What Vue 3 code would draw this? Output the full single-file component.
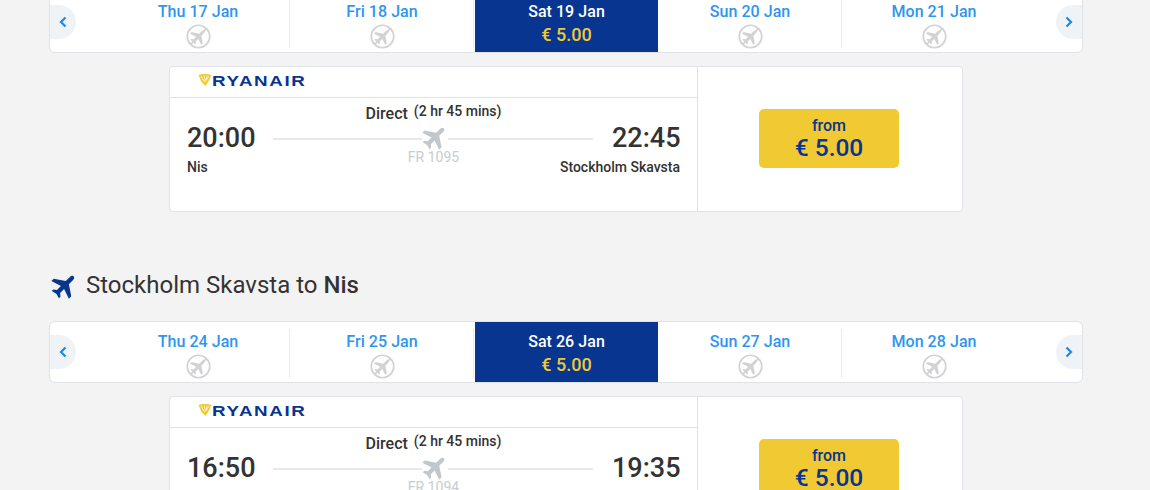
<script setup>
const legs = [
  {
    id: 'out',
    days: ['Thu 17 Jan', 'Fri 18 Jan', 'Sat 19 Jan', 'Sun 20 Jan', 'Mon 21 Jan'],
    depart: '20:00',
    arrive: '22:45',
    from: 'Nis',
    to: 'Stockholm Skavsta',
    flight: 'FR 1095'
  },
  {
    id: 'back',
    title: 'Stockholm Skavsta to ',
    titleBold: 'Nis',
    days: ['Thu 24 Jan', 'Fri 25 Jan', 'Sat 26 Jan', 'Sun 27 Jan', 'Mon 28 Jan'],
    depart: '16:50',
    arrive: '19:35',
    from: 'Stockholm Skavsta',
    to: 'Nis',
    flight: 'FR 1094'
  }
];

// plane pointing up, rotated 45deg where it is used
const planePath = 'M12 .5c1.300 0 2 1.400 2 3v5l9 6v3l-9-3v5l2.500 2v2L12 22.300 7.500 23.500v-2l2.500-2v-5l-9 3v-3l9-6v-5c0-1.600.7-3 2-3z';
</script>

<template>
  <div class="page">
    <section v-for="leg in legs" :key="leg.id" class="leg">
      <h2 v-if="leg.title" class="leg-title">
        <svg class="title-icon" viewBox="0 0 24 24">
          <path :d="planePath" transform="rotate(45 12 12)" />
        </svg>
        <span>{{ leg.title }}<b>{{ leg.titleBold }}</b></span>
      </h2>

      <div class="strip">
        <button class="nav nav-left">
          <svg viewBox="0 0 10 14"><path d="M7.500 2.500 3 7l4.500 4.500" /></svg>
        </button>
        <div class="days">
          <div
            v-for="(day, i) in leg.days"
            :key="day"
            class="day"
            :class="{ active: i === 2, ruled: i === 0 || i === 1 || i === 3 }"
          >
            <span class="day-name">{{ day }}</span>
            <span v-if="i === 2" class="day-price">€ 5.00</span>
            <svg v-else class="no-flight" viewBox="0 0 24 24">
              <circle cx="12" cy="12" r="10.800" />
              <path class="no-plane" :d="planePath" transform="rotate(45 12 12) translate(3.600 3.600) scale(0.7)" />
              <path d="M4.500 19.500 19.500 4.500" />
            </svg>
          </div>
        </div>
        <button class="nav nav-right">
          <svg viewBox="0 0 10 14"><path d="M2.500 2.500 7 7l-4.500 4.500" /></svg>
        </button>
      </div>

      <div class="flight-card">
        <div class="flight-info">
          <div class="carrier">
            <svg class="harp" viewBox="0 0 14 14">
              <path d="M0.500 2C4 .5 10 .5 13.500 2L11 7.500 7.500 13 3.500 9z" />
              <path class="harp-lines" d="M3 3l3.500 6M6 2.500l1.500 6M9 2.500 8 8M11 3 8.500 7" />
            </svg>
            <span class="carrier-name">RYANAIR</span>
          </div>
          <div class="route">
            <div class="duration"><span class="direct">Direct</span><span class="time-span">(2 hr 45 mins)</span></div>
            <div class="times">
              <span class="time">{{ leg.depart }}</span>
              <div class="line">
                <svg class="line-plane" viewBox="0 0 24 24">
                  <path :d="planePath" transform="rotate(45 12 12)" />
                </svg>
              </div>
              <span class="time time-end">{{ leg.arrive }}</span>
            </div>
            <div class="flight-no">{{ leg.flight }}</div>
            <div class="places">
              <span>{{ leg.from }}</span>
              <span>{{ leg.to }}</span>
            </div>
          </div>
        </div>
        <div class="flight-price">
          <button class="price-btn">
            <span class="from">from</span>
            <span class="amount">€ 5.00</span>
          </button>
        </div>
      </div>
    </section>
  </div>
</template>

<style>
html,
body {
  background: #f3f3f3;
  overflow: hidden;
}
</style>

<style scoped>
.page {
  height: 490px;
  overflow: hidden;
  padding: 0 67px 0 49px;
  font-family: Roboto, "Liberation Sans", sans-serif;
  color: #333;
}

.leg {
  margin-top: -9px;
}

.leg + .leg {
  margin-top: 57px;
}

.leg-title {
  display: flex;
  align-items: center;
  gap: 8px;
  height: 32px;
  margin: 0 0 20px 2px;
  font-size: 24px;
  font-weight: 400;
  color: #333;
}

.leg-title b {
  font-weight: 500;
}

.title-icon {
  width: 27px;
  height: 27px;
  fill: #073590;
}

.strip {
  display: flex;
  align-items: center;
  height: 62px;
  box-sizing: border-box;
  background: #fff;
  border: 1px solid #dfe3e8;
  border-radius: 6px;
}

.nav {
  flex: none;
  width: 26px;
  height: 34px;
  padding: 0;
  border: 0;
  background: #f0f3f6;
  display: flex;
  align-items: center;
  justify-content: center;
}

.nav svg {
  width: 10px;
  height: 14px;
  fill: none;
  stroke: #1e88e5;
  stroke-width: 2.200;
}

.nav-left {
  border-radius: 0 17px 17px 0;
}

.nav-right {
  border-radius: 17px 0 0 17px;
}

.days {
  flex: 1;
  display: grid;
  grid-template-columns: repeat(5, 184px);
  justify-content: center;
  align-self: stretch;
  align-items: center;
}

.day {
  height: 60px;
  box-sizing: border-box;
  display: flex;
  flex-direction: column;
  align-items: center;
  padding-top: 10px;
  position: relative;
  color: #2f96f0;
}

.day.ruled::after {
  content: "";
  position: absolute;
  right: 0;
  top: 7px;
  bottom: 4px;
  width: 1px;
  background: #e6e9ee;
}

.day-name {
  font-size: 16px;
  line-height: 20px;
  font-weight: 500;
  letter-spacing: 0.05px;
}

.day.active {
  margin-left: 1px;
  background: #073590;
  color: #fff;
}

.day-price {
  margin-top: 2px;
  font-size: 18px;
  line-height: 22px;
  font-weight: 500;
  color: #f1c933;
}

.no-flight {
  width: 25px;
  height: 25px;
  margin-top: 2px;
  fill: none;
  stroke: #d2d2d2;
  stroke-width: 1.600;
}

.no-plane {
  fill: #d2d2d2;
  stroke: none;
}

.flight-card {
  display: flex;
  width: 794px;
  height: 146px;
  box-sizing: border-box;
  margin: 13px 0 0 120px;
  background: #fff;
  border: 1px solid #dfe3e8;
  border-radius: 4px;
}

.flight-info {
  width: 527px;
  flex: none;
  border-right: 1px solid #dfe3e8;
}

.carrier {
  display: flex;
  align-items: center;
  height: 30px;
  padding-left: 28px;
  border-bottom: 1px solid #dfe3e8;
}

.harp {
  width: 14px;
  height: 14px;
  margin-right: 0;
  margin-top: -5px;
  fill: #f1c933;
}

.harp-lines {
  fill: none;
  stroke: #fff;
  stroke-width: 0.700;
}

.carrier-name {
  font-family: "Liberation Sans", Arial, sans-serif;
  font-size: 15px;
  line-height: 16px;
  font-weight: 700;
  letter-spacing: 1.300px;
  color: #073590;
  margin-top: -2px;
  transform: scaleX(1.250);
  transform-origin: left center;
}

.route {
  padding: 0 17px 0 17px;
}

.duration {
  display: flex;
  justify-content: center;
  align-items: flex-start;
  gap: 6px;
  height: 26px;
  box-sizing: border-box;
  padding-top: 6px;
}

.direct {
  font-size: 16px;
  line-height: 19px;
  font-weight: 500;
}

.time-span {
  font-size: 14px;
  line-height: 16px;
  font-weight: 500;
  margin-top: -1px;
}

.times {
  display: flex;
  align-items: center;
  height: 28px;
}

.time {
  width: 68px;
  font-size: 27px;
  line-height: 28px;
  font-weight: 500;
  white-space: nowrap;
}

.time-end {
  text-align: right;
}

.line {
  flex: 1;
  margin: 2px 19px 0 18px;
  height: 2px;
  background: #e6e8ec;
  position: relative;
}

.line-plane {
  position: absolute;
  left: 50%;
  top: -14px;
  width: 26px;
  height: 26px;
  margin-left: -11px;
  background: #fff;
  fill: #c2c7cc;
}

.flight-no {
  margin-top: -3px;
  height: 10px;
  font-size: 14px;
  line-height: 16px;
  text-align: center;
  color: #c8ccd2;
}

.places {
  display: flex;
  justify-content: space-between;
  font-size: 14px;
  line-height: 16px;
  font-weight: 500;
}

.flight-price {
  flex: 1;
  display: flex;
  justify-content: center;
  padding-top: 42px;
  padding-right: 2px;
}

.price-btn {
  width: 140px;
  height: 59px;
  padding: 0;
  border: 0;
  border-radius: 5px;
  background: #f1c933;
  color: #073590;
  font-family: inherit;
  display: flex;
  flex-direction: column;
  align-items: center;
  justify-content: center;
}

.from {
  font-size: 16px;
  line-height: 18px;
  font-weight: 500;
}

.amount {
  font-size: 24.500px;
  line-height: 26px;
  font-weight: 500;
}
</style>
